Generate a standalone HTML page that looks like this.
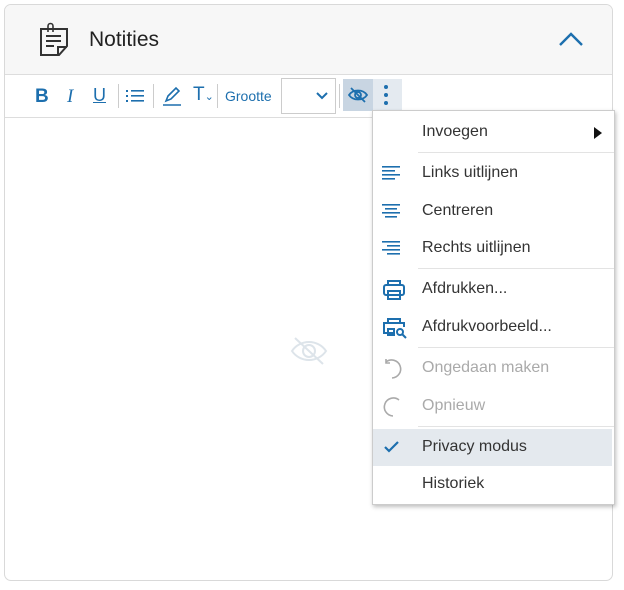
<!DOCTYPE html><html><head><style>
body{margin:0;background:#fff;font-family:"Liberation Sans",sans-serif;width:624px;height:590px;position:relative;overflow:hidden}
.card{position:absolute;left:4px;top:4px;width:607px;height:575px;border:1px solid #d9d9d9;border-radius:7px;overflow:hidden;background:#fff}
.hdr{height:69px;background:#f7f7f7;border-bottom:1px solid #ddd;position:relative}
.hdr .t{position:absolute;left:84px;top:23px;font-size:21px;color:#222}
.tb{height:42px;border-bottom:1px solid #ddd;position:relative;background:#fff}
.tb>*{position:absolute}
.b{color:#1d6fae}
.sep{width:1px;height:24px;background:#ccc;top:9px}
.menu{position:absolute;left:372px;top:110px;width:241px;height:393px;background:#fff;border:1px solid #ccc;box-shadow:1px 2px 4px rgba(0,0,0,.25)}
.it{position:absolute;left:0;width:239px;height:37px;font-size:16px;color:#333}
.it span{position:absolute;left:49px;top:9px}
.it svg{position:absolute;left:9px;top:8px}
.hr{position:absolute;left:45px;right:0;height:1px;background:#e3e3e3}
.dis{color:#aaa}
</style></head><body>
<div class="card">
<div class="hdr">
<svg style="position:absolute;left:31px;top:17px" width="36" height="36" viewBox="0 0 36 36" fill="none" stroke="#333" stroke-width="2"><path d="M5 7h26v17l-8 9H5z"/><path d="M22 33v-8h9"/><path d="M10 14h15M10 19h15M10 24h8"/><path d="M12 10V4a2.5 2.5 0 015 0v6" stroke-width="1.6"/></svg>
<div class="t">Notities</div>
<svg style="position:absolute;left:553px;top:26px" width="26" height="16" viewBox="0 0 26 16"><path d="M2 14L13 3l11 11" fill="none" stroke="#1d6fae" stroke-width="2.4"/></svg>
</div>
<div class="tb">
<div class="b" style="left:30px;top:11px;font-size:19px;font-weight:bold">B</div>
<div class="b" style="left:62px;top:11px;font-size:19px;font-style:italic;font-family:'Liberation Serif'">I</div>
<div class="b" style="left:88px;top:10px;font-size:18px;text-decoration:underline">U</div>
<div class="sep" style="left:113px"></div>
<svg style="position:absolute;left:121px;top:13px" width="18" height="16"><g fill="#1d6fae"><rect x="0" y="2" width="2" height="2"/><rect x="0" y="7" width="2" height="2"/><rect x="0" y="12" width="2" height="2"/><rect x="5" y="2" width="13" height="1.6"/><rect x="5" y="7" width="13" height="1.6"/><rect x="5" y="12" width="13" height="1.6"/></g></svg>
<div class="sep" style="left:148px"></div>
<svg style="position:absolute;left:157px;top:11px" width="20" height="20" viewBox="0 0 20 20" fill="none" stroke="#1d6fae" stroke-width="1.6"><path d="M4 15l2-5 8-8 3 3-8 8z"/><path d="M1 19h18"/></svg>
<div class="b" style="left:188px;top:9px;font-size:19px">T<span style="font-size:11px">⌄</span></div>
<div class="sep" style="left:212px"></div>
<div class="b" style="left:220px;top:13px;font-size:14px">Grootte</div>
<div style="left:276px;top:3px;width:53px;height:34px;border:1px solid #ccc;background:#fff"></div>
<svg style="position:absolute;left:311px;top:17px" width="12" height="8"><path d="M1 1l5 5 5-5" fill="none" stroke="#1d6fae" stroke-width="2"/></svg>
<div class="sep" style="left:334px"></div>
<div style="left:338px;top:4px;width:30px;height:32px;background:#c8d5e2"></div>
<svg style="position:absolute;left:343px;top:12px" width="20" height="16" viewBox="0 0 20 16" fill="none" stroke="#1d6fae" stroke-width="1.8"><path d="M1 8c4-6 14-6 18 0c-4 6-14 6-18 0z"/><circle cx="10" cy="8" r="3"/><path d="M3 1l14 14"/></svg>
<div style="left:368px;top:4px;width:29px;height:32px;background:#e4eaf0"></div>
<svg style="position:absolute;left:378px;top:9px" width="6" height="22"><g fill="#1d6fae"><circle cx="3" cy="3" r="2"/><circle cx="3" cy="11" r="2"/><circle cx="3" cy="19" r="2"/></g></svg>
</div>
<svg style="position:absolute;left:285px;top:330px" width="38" height="32" viewBox="0 0 38 32" fill="none" stroke="#dde4ea" stroke-width="2"><path d="M2 16c8-12 26-12 34 0c-8 12-26 12-34 0z"/><circle cx="19" cy="16" r="6"/><path d="M5 3l28 26"/></svg>
</div>
<div class="menu">
<div class="it" style="top:3px"><span>Invoegen</span><svg style="left:221px;top:13px" width="8" height="12"><path d="M0 0l8 6-8 6z" fill="#111"/></svg></div>
<div class="hr" style="top:41px"></div>
<div class="it" style="top:44px"><svg width="22" height="20"><g fill="#1d6fae"><rect y="3" width="18" height="1.6"/><rect y="7" width="13" height="1.6"/><rect y="11" width="18" height="1.6"/><rect y="15" width="13" height="1.6"/></g></svg><span>Links uitlijnen</span></div>
<div class="it" style="top:82px"><svg width="22" height="20"><g fill="#1d6fae"><rect y="3" width="18" height="1.6"/><rect x="3" y="7" width="12" height="1.6"/><rect y="11" width="18" height="1.6"/><rect x="3" y="15" width="12" height="1.6"/></g></svg><span>Centreren</span></div>
<div class="it" style="top:119px"><svg width="22" height="20"><g fill="#1d6fae"><rect y="3" width="18" height="1.6"/><rect x="5" y="7" width="13" height="1.6"/><rect y="11" width="18" height="1.6"/><rect x="5" y="15" width="13" height="1.6"/></g></svg><span>Rechts uitlijnen</span></div>
<div class="hr" style="top:157px"></div>
<div class="it" style="top:160px"><svg width="24" height="22" viewBox="0 0 24 22" fill="none" stroke="#1d6fae" stroke-width="2"><path d="M6 6V2h12v4"/><rect x="2" y="6" width="20" height="10" rx="2"/><rect x="6" y="12" width="12" height="8"/></svg><span>Afdrukken...</span></div>
<div class="it" style="top:198px"><svg width="26" height="22" viewBox="0 0 26 22" fill="none" stroke="#1d6fae" stroke-width="2"><path d="M6 6V2h12v4"/><path d="M12 16H2V6h20v4"/><rect x="6" y="12" width="6" height="6"/><circle cx="18" cy="15" r="3"/><path d="M20 17l4 4"/></svg><span>Afdrukvoorbeeld...</span></div>
<div class="hr" style="top:236px"></div>
<div class="it dis" style="top:239px"><svg width="22" height="22" viewBox="0 0 22 22" fill="none" stroke="#aaa" stroke-width="1.6"><path d="M4 4a9 9 0 11 6 16"/><path d="M4 1v4h4"/></svg><span>Ongedaan maken</span></div>
<div class="it dis" style="top:277px"><svg width="22" height="22" viewBox="0 0 22 22" fill="none" stroke="#aaa" stroke-width="1.6"><path d="M17 4a9 9 0 10-6 16"/></svg><span>Opnieuw</span></div>
<div class="hr" style="top:315px"></div>
<div class="it" style="top:318px;background:#e4e9ee"><svg width="20" height="20"><path d="M3 10l4 4 9-9" fill="none" stroke="#1d6fae" stroke-width="2.2"/></svg><span>Privacy modus</span></div>
<div class="it" style="top:355px"><span>Historiek</span></div>
</div>
</body></html>
